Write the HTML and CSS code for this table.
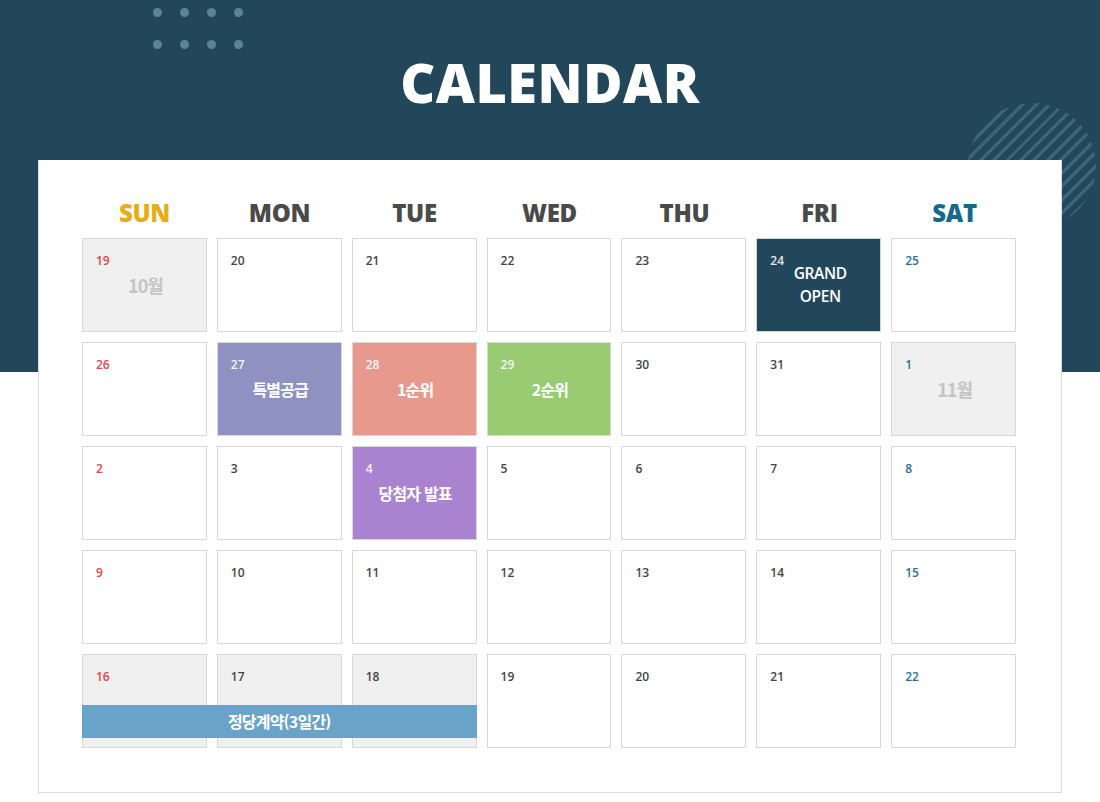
FILE: index.html
```html
<!DOCTYPE html>
<html lang="ko">
<head>
<meta charset="utf-8">
<title>Calendar</title>
<link rel="stylesheet" href="styles.css">
</head>
<body>
<div class="page">
  <div class="deco-dots">
    <span></span><span></span><span></span><span></span>
    <span></span><span></span><span></span><span></span>
  </div>
  <div class="deco-circle"></div>
  <header class="hero">
    <h1 class="title">CALENDAR</h1>
  </header>
  <section class="card">
    <div class="weekdays">
      <div class="wd sun">SUN</div>
      <div class="wd">MON</div>
      <div class="wd">TUE</div>
      <div class="wd">WED</div>
      <div class="wd">THU</div>
      <div class="wd">FRI</div>
      <div class="wd sat">SAT</div>
    </div>
    <div class="grid">
      <div class="cell gray"><span class="num sun">19</span><span class="label month">10월</span></div>
      <div class="cell"><span class="num">20</span></div>
      <div class="cell"><span class="num">21</span></div>
      <div class="cell"><span class="num">22</span></div>
      <div class="cell"><span class="num">23</span></div>
      <div class="cell ev-open"><span class="num">24</span><span class="label en">GRAND<br>OPEN</span></div>
      <div class="cell"><span class="num sat">25</span></div>

      <div class="cell"><span class="num sun">26</span></div>
      <div class="cell ev-special"><span class="num">27</span><span class="label">특별공급</span></div>
      <div class="cell ev-first"><span class="num">28</span><span class="label">1순위</span></div>
      <div class="cell ev-second"><span class="num">29</span><span class="label">2순위</span></div>
      <div class="cell"><span class="num">30</span></div>
      <div class="cell"><span class="num">31</span></div>
      <div class="cell gray"><span class="num sat">1</span><span class="label month">11월</span></div>

      <div class="cell"><span class="num sun">2</span></div>
      <div class="cell"><span class="num">3</span></div>
      <div class="cell ev-winner"><span class="num">4</span><span class="label">당첨자 발표</span></div>
      <div class="cell"><span class="num">5</span></div>
      <div class="cell"><span class="num">6</span></div>
      <div class="cell"><span class="num">7</span></div>
      <div class="cell"><span class="num sat">8</span></div>

      <div class="cell"><span class="num sun">9</span></div>
      <div class="cell"><span class="num">10</span></div>
      <div class="cell"><span class="num">11</span></div>
      <div class="cell"><span class="num">12</span></div>
      <div class="cell"><span class="num">13</span></div>
      <div class="cell"><span class="num">14</span></div>
      <div class="cell"><span class="num sat">15</span></div>

      <div class="cell gray w5 c1"><span class="num sun">16</span></div>
      <div class="cell gray w5 c2"><span class="num">17</span></div>
      <div class="cell gray w5 c3"><span class="num">18</span></div>
      <div class="cell"><span class="num">19</span></div>
      <div class="cell"><span class="num">20</span></div>
      <div class="cell"><span class="num">21</span></div>
      <div class="cell"><span class="num sat">22</span></div>

      <div class="bar">정당계약(3일간)</div>
    </div>
  </section>
</div>
</body>
</html>
```

FILE: styles.css
```css
* { box-sizing: border-box; }
html, body { margin: 0; padding: 0; }
body {
  font-family: "Open Sans", "Noto Sans CJK KR", sans-serif;
  background: #fff;
}
.page {
  position: relative;
  width: 1100px;
  height: 802px;
  overflow: hidden;
  background: linear-gradient(to bottom, #23475a 0, #23475a 372px, #fff 372px);
}
.deco-dots {
  position: absolute;
  left: 153px;
  top: 8px;
  display: grid;
  grid-template-columns: repeat(4, 9px);
  grid-auto-rows: 9px;
  column-gap: 18px;
  row-gap: 23px;
}
.deco-dots span {
  width: 9px;
  height: 9px;
  border-radius: 50%;
  background: #5a8597;
}
.deco-circle {
  position: absolute;
  left: 968px;
  top: 103px;
  width: 128px;
  height: 126px;
  border-radius: 50%;
  background: repeating-linear-gradient(135deg, #3b6577 0, #3b6577 3.5px, transparent 3.5px, transparent 9.5px);
}
.hero {
  position: relative;
  height: 160px;
  padding-top: 55px;
  text-align: center;
}
.title {
  margin: 0;
  font-family: "Open Sans", sans-serif;
  font-weight: 800;
  font-size: 54px;
  line-height: 54px;
  color: #fff;
  letter-spacing: 0.5px;
}
.card {
  position: relative;
  margin: 0 38px;
  height: 633px;
  background: #fff;
  border: 1px solid #dcdcdc;
  border-top: none;
  padding: 37px 44px 0 43px;
}
.weekdays {
  display: grid;
  grid-template-columns: repeat(7, 1fr);
  column-gap: 10px;
  height: 32px;
  margin-bottom: 9px;
}
.wd {
  text-align: center;
  font-family: "Open Sans", sans-serif;
  font-weight: 800;
  font-size: 24px;
  line-height: 32px;
  color: #4a4a4a;
  letter-spacing: -0.3px;
}
.wd.sun { color: #e8ab1a; }
.wd.sat { color: #16698c; }
.grid {
  display: grid;
  grid-template-columns: repeat(7, 1fr);
  grid-template-rows: repeat(5, 94px);
  column-gap: 10px;
  row-gap: 10px;
  width: 934px;
}
.cell {
  display: grid;
  grid-template: 1fr / 1fr;
  border: 1px solid #d8d8d8;
  background: #fff;
}
.cell > * { grid-area: 1 / 1; }
.cell.gray { background: #f0f0f0; }
.w5 { grid-row: 5; }
.c1 { grid-column: 1; }
.c2 { grid-column: 2; }
.c3 { grid-column: 3; }
.num {
  align-self: start;
  justify-self: start;
  padding: 14px 0 0 13px;
  font-family: "Open Sans", sans-serif;
  font-weight: 600;
  font-size: 12px;
  line-height: 16px;
  color: #444;
}
.num.sun { color: #e2474b; }
.num.sat { color: #2d7090; }
.label {
  align-self: center;
  justify-self: center;
  text-align: center;
  font-family: "Noto Sans CJK KR", sans-serif;
  font-weight: 700;
  font-size: 16px;
  line-height: 22px;
  color: #fff;
  letter-spacing: -0.8px;
  padding-left: 2px;
}
.label.month {
  color: #c4c4c4;
  font-size: 18px;
  letter-spacing: -1px;
}
.label.en {
  font-family: "Open Sans", sans-serif;
  font-weight: 600;
  font-size: 15.5px;
  line-height: 23px;
  letter-spacing: -0.4px;
  padding-left: 3px;
}
.ev-open { background: #23475a; border-color: #cfd6da; }
.ev-open .num { color: #e6e6e6; }
.ev-special { background: #8f92c1; }
.ev-first { background: #e8998d; }
.ev-second { background: #98cb72; }
.ev-winner { background: #a983cf; }
.ev-special .num, .ev-first .num, .ev-second .num, .ev-winner .num { color: #f3f3f3; }
.bar {
  position: relative;
  z-index: 1;
  grid-row: 5;
  grid-column: 1 / 4;
  align-self: end;
  height: 33px;
  margin-bottom: 10px;
  background: #6aa3c8;
  color: #fff;
  text-align: center;
  font-family: "Noto Sans CJK KR", sans-serif;
  font-weight: 700;
  font-size: 16px;
  line-height: 33px;
  letter-spacing: -0.8px;
}
```
